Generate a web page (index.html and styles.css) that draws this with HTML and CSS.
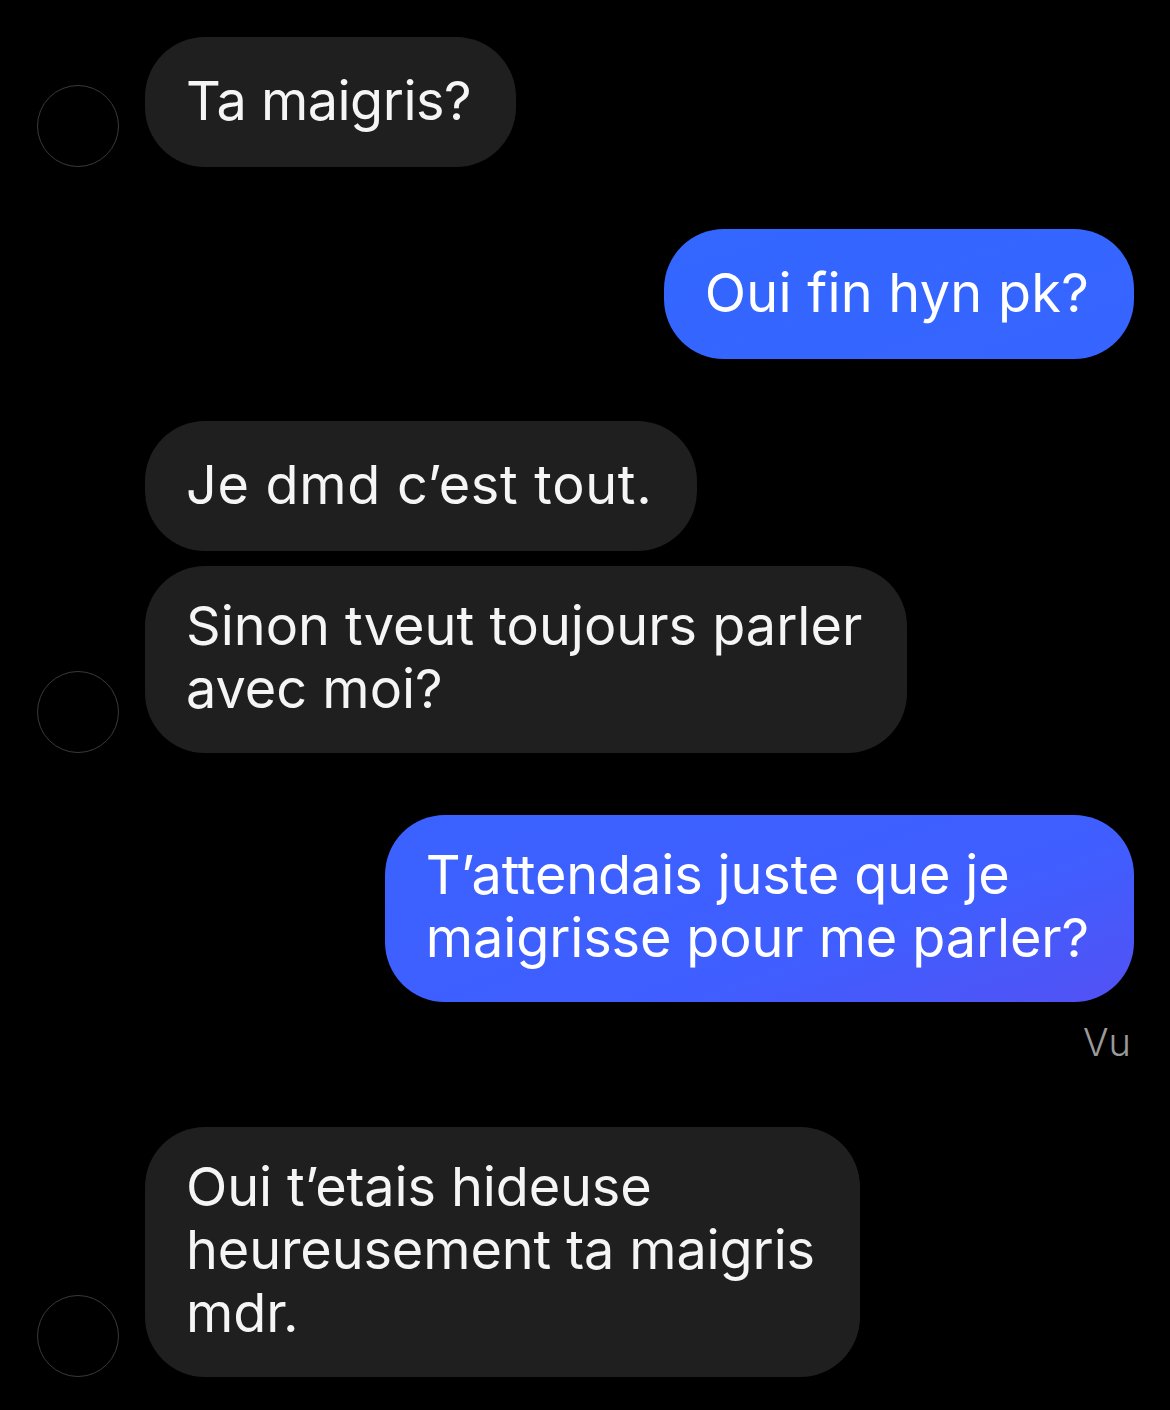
FILE: index.html
```html
<!DOCTYPE html>
<html lang="fr">
<head>
    <meta charset="UTF-8">
    <meta name="viewport" content="width=device-width, initial-scale=1.0">
    <title>Messages</title>
    <link rel="stylesheet" href="styles.css">
</head>
<body>
    <div class="thread">
        <div class="row incoming">
            <div class="avatar"></div>
            <div class="bubble short tight">Ta maigris?</div>
        </div>
        <div class="row outgoing">
            <div class="bubble short loose">Oui fin hyn pk?</div>
        </div>
        <div class="row incoming">
            <div class="bubble short no-avatar wide">Je dmd c’est tout.</div>
        </div>
        <div class="row incoming same-group">
            <div class="avatar"></div>
            <div class="bubble">Sinon tveut toujours parler<br>avec moi?</div>
        </div>
        <div class="row outgoing">
            <div class="bubble snug">T’attendais juste que je<br>maigrisse pour me parler?</div>
        </div>
        <div class="seen">Vu</div>
        <div class="row incoming">
            <div class="avatar"></div>
            <div class="bubble snug">Oui t’etais hideuse<br>heureusement ta maigris<br>mdr.</div>
        </div>
    </div>
</body>
</html>
```

FILE: styles.css
```css
body {
    margin: 0;
    background-color: #000;
    font-family: Inter, "Liberation Sans", sans-serif;
    color: #f5f5f5;
}
.thread {
    display: flex;
    flex-direction: column;
    gap: 62px;
    padding: 37px 36px 33px 37px;
}
.row {
    display: flex;
    align-items: flex-end;
    gap: 26px;
}
.same-group {
    margin-top: -47px;
}
.outgoing {
    justify-content: flex-end;
}
.avatar {
    box-sizing: border-box;
    width: 82px;
    height: 82px;
    border: 1px solid #3a3a3a;
    border-radius: 50%;
}
.bubble {
    box-sizing: border-box;
    padding: 28px 45px 33px 41px;
    border-radius: 60px;
    background-color: #1f1f1f;
    font-size: 54px;
    line-height: 63px;
}
.short {
    padding-top: 32px;
    padding-bottom: 35px;
}
/* small tracking fixes, line widths differ a bit per bubble */
.tight {
    letter-spacing: -0.5px;
}
.snug {
    letter-spacing: -0.12px;
}
.loose {
    letter-spacing: 0.25px;
}
.wide {
    letter-spacing: 0.7px;
}
.no-avatar {
    margin-left: 108px;
}
.outgoing .bubble {
    background: linear-gradient(160deg, #2b6cff 0%, #3a62ff 52%, #405eff 68%, #5450f2 78%) fixed;
    color: #fff;
}
.seen {
    margin-top: -44px;
    margin-bottom: 1px;
    padding-right: 3px;
    text-align: right;
    font-size: 38px;
    font-weight: 300;
    line-height: 44px;
    color: #9a9a9a;
}
```
